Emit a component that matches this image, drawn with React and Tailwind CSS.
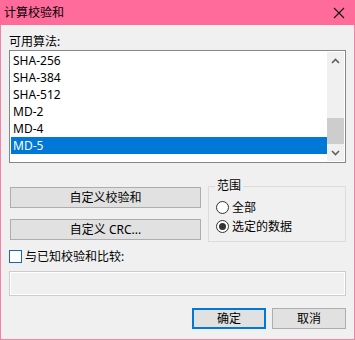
import React from "react";

const algos = ["SHA-256", "SHA-384", "SHA-512", "MD-2", "MD-4", "MD-5"];

const Chevron = ({ up }) => (
  <svg width="9" height="6" viewBox="0 0 9 6" className="block">
    <path d={up ? "M1 5 L4.5 1.5 L8 5" : "M1 1 L4.5 4.5 L8 1"} fill="none" stroke="#606060" strokeWidth="1.6" />
  </svg>
);

const Radio = ({ checked, label }) => (
  <div className="flex items-center h-[13px]">
    <span className="w-[13px] h-[13px] rounded-full border border-[#333] bg-white flex items-center justify-center">
      {checked && <span className="w-[7px] h-[7px] rounded-full bg-[#333]" />}
    </span>
    <span className="ml-[3px] leading-[13px]">{label}</span>
  </div>
);

const Btn = ({ children, primary, className }) => (
  <button
    className={
      "h-[21px] bg-[#e1e1e1] text-[12px] leading-[16px] text-black " +
      (primary ? "border-2 border-[#0078d7] " : "border border-[#adadad] ") +
      (className || "")
    }
  >
    {children}
  </button>
);

export default function App() {
  return (
    <div className="w-[355px] h-[340px] bg-[#f0f0f0] border border-[#f580a8] border-t-0 flex flex-col text-[12px] text-black font-['Noto_Sans','Noto_Sans_CJK_SC',sans-serif]">
      <div className="h-[25px] bg-[#ff6c9b] flex items-center justify-between -mx-[1px] pl-[4px] pr-[10px]">
        <span className="leading-[16px]">计算校验和</span>
        <svg width="12" height="12" viewBox="0 0 12 12">
          <path d="M1 1 L11 11 M11 1 L1 11" stroke="#111" strokeWidth="1.1" />
        </svg>
      </div>

      <div className="px-[8px] pt-[9px] flex flex-col">
        <div className="h-[16px] leading-[16px]">可用算法:</div>

        <div className="h-[113px] border border-[#828790] bg-white p-[1px] flex">
          <div className="flex-1 flex flex-col">
            {algos.map((a) => (
              <div
                key={a}
                className={
                  "h-[17px] leading-[17px] pl-[2px] " +
                  (a === "MD-5" ? "bg-[#0078d7] text-white" : "")
                }
              >
                {a}
              </div>
            ))}
          </div>
          <div className="w-[17px] bg-[#f0f0f0] flex flex-col">
            <div className="h-[17px] flex items-center justify-center">
              <Chevron up />
            </div>
            <div className="flex-1 flex flex-col justify-end">
              <div className="h-[26px] bg-[#cdcdcd]" />
            </div>
            <div className="h-[17px] flex items-center justify-center">
              <Chevron />
            </div>
          </div>
        </div>

        <div className="mt-[23px] flex items-start">
          <div className="ml-[1px] w-[191px] flex flex-col gap-[11px] pt-[1px]">
            <Btn>自定义校验和</Btn>
            <Btn>自定义 CRC...</Btn>
          </div>
          <div className="ml-auto w-[138px] h-[56px] border border-[#dcdcdc] relative pl-[7px] pt-[14px] flex flex-col gap-[6px]">
            <span className="absolute -top-[9px] left-[6px] px-[2px] bg-[#f0f0f0] leading-[16px]">范围</span>
            <Radio label="全部" />
            <Radio checked label="选定的数据" />
          </div>
        </div>

        <div className="mt-[8px] flex items-center h-[13px]">
          <span className="w-[13px] h-[13px] border border-[#1c65b4] bg-white" />
          <span className="ml-[3px] leading-[13px]">与已知校验和比较:</span>
        </div>

        <div className="mt-[8px] h-[25px] border border-[#cccccc] bg-[#f0f0f0] shadow-[inset_0_0_0_1px_#ffffff]" />

        <div className="mt-[12px] flex justify-end gap-[6px]">
          <Btn primary className="w-[74px]">确定</Btn>
          <Btn className="w-[74px]">取消</Btn>
        </div>
      </div>
    </div>
  );
}
